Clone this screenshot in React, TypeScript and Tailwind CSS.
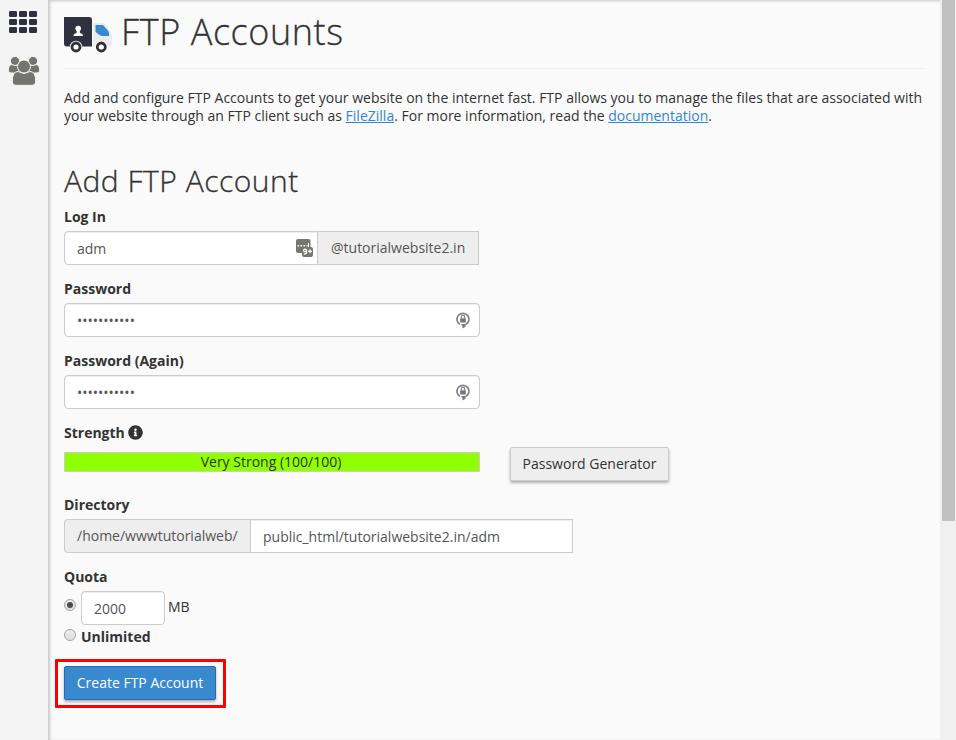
import React, { useState } from "react";
import { FaInfoCircle } from "react-icons/fa";

const inputClass =
  "h-[34px] border border-[#ccc] bg-white px-3 pt-[1px] text-[14px] leading-[20px] text-[#555] outline-none shadow-[inset_0_1px_1px_rgba(0,0,0,0.075)]";

function TruckIcon() {
  return (
    <svg width="48" height="37" viewBox="0 0 48 37" className="shrink-0">
      <path d="M29 7h9q4 0 6 4l3 6q1 2 1 5v5q0 4-4 4H29z" fill="#ececec" />
      <path d="M0 1h25q3 0 3 3v26.500H3q-3 0-3-3z" fill="#2f3140" />
      <path d="M31.500 9h7.500l4.500 5q1.500 1.500 1.500 3.500V20h-7q-1 0-2-.7l-4.500-3.300z" fill="#3889d3" />
      <circle cx="14.200" cy="12.500" r="2.800" fill="#fff" />
      <path d="M12.800 13h2.800l.4 4q3 .5 3 3H9.500q0-2.500 3-3z" fill="#fff" />
      <circle cx="12" cy="31" r="6.200" fill="#fafafa" />
      <circle cx="12" cy="31" r="4" fill="#fff" stroke="#2f3338" strokeWidth="2.800" />
      <circle cx="37.300" cy="31" r="6.200" fill="#fafafa" />
      <circle cx="37.300" cy="31" r="4" fill="#fff" stroke="#2f3338" strokeWidth="2.800" />
    </svg>
  );
}

function AppsIcon() {
  return (
    <svg width="28" height="23" viewBox="0 0 28 23" fill="#2f3140">
      {[0, 8, 16].map((y) =>
        [0, 10, 20].map((x) => (
          <rect key={`${x}-${y}`} x={x} y={y} width="8" height="6" rx="1.200" />
        ))
      )}
    </svg>
  );
}

function UsersIcon() {
  return (
    <svg width="32" height="30" viewBox="0 0 32 30" fill="#74756f" stroke="#f4f4f4" strokeWidth="1" className="ml-[2px]">
      <circle cx="7" cy="5" r="4.600" />
      <circle cx="25" cy="5" r="4.600" />
      <path d="M.4 14.500q0-6 3.600-6l3 1 4-.5 2 8H3q-2.600 0-2.600-2.500z" />
      <path d="M31.600 14.500q0-6-3.600-6l-3 1-4-.5-2 8h10q2.600 0 2.600-2.500z" />
      <path d="M4.300 25q0-9.500 5.700-9.500l6 2 6-2q5.700 0 5.700 9.500 0 4.300-4 4.300H8.300q-4 0-4-4.300z" />
      <circle cx="16" cy="10.500" r="6.500" />
    </svg>
  );
}

function GeneratorIcon() {
  return (
    <svg width="17" height="19" viewBox="0 0 17 19">
      <rect x="0" y="0" width="14.500" height="14" rx="2" fill="#777771" />
      <path d="M1.500 6h1.600v1.600H1.500zM4.500 6h1.600v1.600H4.500zM7.500 6h1.600v1.600H7.500zM10.500 6h1v1.600h-1zM12 4h1v4h-1z" fill="#fff" />
      <rect x="6" y="8" width="11" height="10" rx="2" fill="#777771" />
      <circle cx="9" cy="11.500" r="1.400" fill="none" stroke="#fff" strokeWidth="1.200" />
      <path d="M10.500 10.500v3.200q0 1.500-2.700 1.100M12 12.300h4M14 10.300v4" fill="none" stroke="#fff" strokeWidth="1.200" />
    </svg>
  );
}

function LockIcon() {
  return (
    <svg width="14" height="17" viewBox="0 0 14 17">
      <path d="M3.800 12.400A6 6 0 1 1 9.800 12.600" fill="none" stroke="#83838b" strokeWidth="1.700" />
      <path d="M6.500 16.500V14l-2-1.500 5-.8v3z" fill="#74747c" />
      <rect x="4.200" y="6.200" width="5.600" height="4.300" rx=".5" fill="#74747c" />
      <path d="M5.300 6.500V5a1.700 1.700 0 0 1 3.400 0v1.500" fill="none" stroke="#83838b" strokeWidth="1.200" />
    </svg>
  );
}

function Label({ children }: { children: React.ReactNode }) {
  return (
    <div className="mb-[5px] flex h-[18px] items-center gap-[3px] text-[14px] font-bold leading-[18px]">
      {children}
    </div>
  );
}

function PasswordField({ label }: { label: string }) {
  return (
    <div className="mb-[15px]">
      <Label>{label}</Label>
      <div className={`${inputClass} flex w-[416px] items-center justify-between rounded-[4px] !pr-[9px]`}>
        <span>•••••••••••</span>
        <LockIcon />
      </div>
    </div>
  );
}

function Radio({ checked, onClick }: { checked: boolean; onClick: () => void }) {
  return (
    <button
      role="radio"
      aria-checked={checked}
      onClick={onClick}
      className="flex size-[12px] shrink-0 items-center justify-center rounded-full border border-[#a5a5a5] bg-gradient-to-b from-[#ececec] to-[#dedede]"
    >
      {checked && <span className="size-[6px] rounded-full bg-[#4c4c4c]" />}
    </button>
  );
}

export default function App() {
  const [login, setLogin] = useState("adm");
  const [directory, setDirectory] = useState("public_html/tutorialwebsite2.in/adm");
  const [quota, setQuota] = useState("2000");
  const [unlimited, setUnlimited] = useState(false);

  return (
    <div className="flex h-[740px] w-[956px] overflow-hidden bg-[#fafafa] font-['Open_Sans',sans-serif] text-[14px] leading-[18px] text-[#333]">
      <aside className="flex w-[48px] shrink-0 flex-col items-center gap-[22px] bg-[#f4f4f4] pt-[11px] pr-[2px]">
        <AppsIcon />
        <UsersIcon />
      </aside>

      <main className="w-[892px] shrink-0 pl-4 pr-[15px] shadow-[inset_2px_1px_3px_rgba(0,0,0,0.2)]">
        <div className="flex h-[69px] items-start border-b border-[#eee] pt-4">
          <TruckIcon />
          <h1 className="ml-[9px] -mt-[4px] text-[36px] font-light leading-[40px] tracking-[0.58px] [-webkit-text-stroke:0.3px_#333]">
            FTP Accounts
          </h1>
        </div>
        <p className="mt-5 whitespace-nowrap">
          Add and configure FTP Accounts to get your website on the internet fast. FTP allows you to manage the files that are associated with
          <br />
          your website through an FTP client such as{" "}
          <a href="#" className="text-[#2f87cf] underline">FileZilla</a>. For more information, read the{" "}
          <a href="#" className="text-[#2f87cf] underline">documentation</a>.
        </p>

        <h2 className="mt-[39px] mb-[11px] text-[30px] font-light leading-[33px] tracking-[0.5px] [-webkit-text-stroke:0.3px_#333]">
          Add FTP Account
        </h2>

        <div className="mb-[15px]">
          <Label>Log In</Label>
          <div className="flex">
            <div className={`${inputClass} flex w-[254px] items-center rounded-l-[4px] !pr-[4px]`}>
              <input className="min-w-0 flex-1 outline-none" value={login} onChange={(e) => setLogin(e.target.value)} />
              <GeneratorIcon />
            </div>
            <span className="flex h-[34px] w-[161px] items-center border border-l-0 border-[#ccc] bg-[#eee] pl-[13px] pb-[1px] text-[#555]">
              @tutorialwebsite2.in
            </span>
          </div>
        </div>

        <PasswordField label="Password" />
        <PasswordField label="Password (Again)" />

        <div className="mb-[15px]">
          <Label>
            Strength <FaInfoCircle size={15} className="-mt-[2px]" />
          </Label>
          <div className="flex h-[34px] gap-[30px]">
            <div className="mt-[5px] h-[20px] w-[416px] border border-[#ccc] bg-[#90ff00] pr-[2px] text-center text-[#333]">
              Very Strong (100/100)
            </div>
            <button className="h-[34px] w-[159px] rounded-[2px] border border-[#ccc] bg-[#eee] shadow-[0_2px_3px_rgba(0,0,0,0.3)]">
              Password Generator
            </button>
          </div>
        </div>

        <div className="mb-[15px]">
          <Label>Directory</Label>
          <div className="flex">
            <span className="flex h-[34px] w-[186px] items-center rounded-l-[4px] border border-r-0 border-[#ccc] bg-[#eee] pl-3 text-[#555]">
              /home/wwwtutorialweb/
            </span>
            <input
              className={`${inputClass} w-[323px]`}
              value={directory}
              onChange={(e) => setDirectory(e.target.value)}
            />
          </div>
        </div>

        <Label>Quota</Label>
        <div className="flex h-[34px] items-center">
          <div className="-mt-[7px] mr-[5px] flex">
            <Radio checked={!unlimited} onClick={() => setUnlimited(false)} />
          </div>
          <input
            className={`${inputClass} w-[84px] rounded-[4px]`}
            value={quota}
            onChange={(e) => setQuota(e.target.value)}
          />
          <span className="ml-[3px] -mt-[3px]">MB</span>
        </div>
        <div className="mt-[3px] flex h-[18px] items-start">
          <div className="mt-[1px] mr-[5px]">
            <Radio checked={unlimited} onClick={() => setUnlimited(true)} />
          </div>
          <span className="font-bold">Unlimited</span>
        </div>

        <div className="-ml-[9px] mt-[13px] flex h-[49px] w-[171px] items-start rounded-[1px] border-[3px] border-[#f00] pl-[6px] pt-[4px]">
          <button className="h-[34px] w-[152px] shrink-0 rounded-[2px] border border-[#2d6aab] bg-[#3889d0] text-white shadow-[0_2px_3px_rgba(0,0,0,0.3)]">
            Create FTP Account
          </button>
        </div>
      </main>

      <div className="w-4 shrink-0 bg-[#f0f0f0] pl-[2px]">
        <div className="h-[521px] w-[13px] bg-[#c1c1c1]" />
      </div>
    </div>
  );
}
